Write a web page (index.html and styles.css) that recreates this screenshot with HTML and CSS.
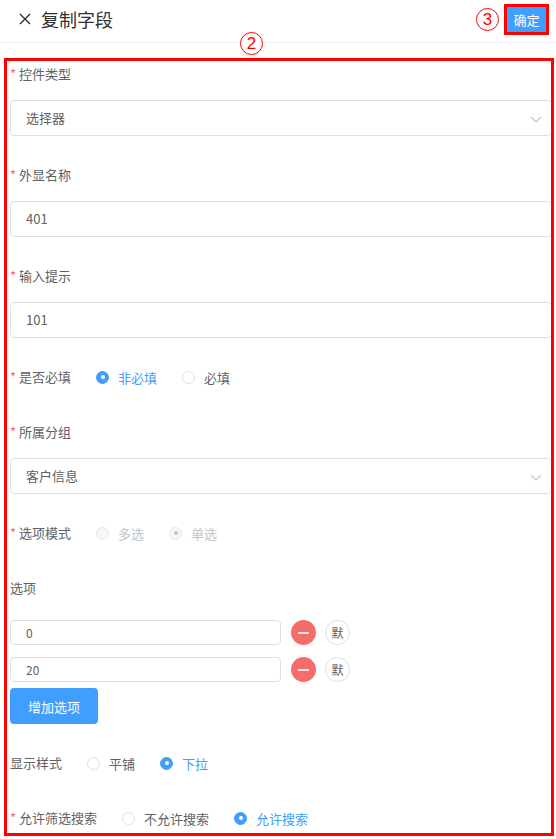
FILE: index.html
```html
<!DOCTYPE html>
<html lang="zh-CN">
<head>
  <meta charset="UTF-8" />
  <meta name="viewport" content="width=device-width, initial-scale=1.0"/>
  <title>复制字段</title>
  <link rel="stylesheet" href="styles.css">
</head>
<body>
  <header class="header">
    <svg class="close" width="12" height="12" viewBox="0 0 12 12">
      <path d="M1 1 L11 11 M11 1 L1 11" stroke="#303133" stroke-width="1.4" fill="none"/>
    </svg>
    <div class="title">复制字段</div>
    <div class="header-right">
      <span class="mark">3</span>
      <button class="btn-ok" type="button">确定</button>
    </div>
  </header>

  <div class="form">
    <div class="item">
      <div class="item-label req">控件类型</div>
      <div class="input select">选择器
        <svg class="arrow" width="12" height="7" viewBox="0 0 12 7"><polyline points="1,1 6,6 11,1" stroke="#c0c4cc" stroke-width="1.2" fill="none"/></svg>
      </div>
    </div>

    <div class="item">
      <div class="item-label req">外显名称</div>
      <div class="input">401</div>
    </div>

    <div class="item">
      <div class="item-label req">输入提示</div>
      <div class="input">101</div>
    </div>

    <div class="item inline">
      <div class="item-label req">是否必填</div>
      <label class="radio checked"><span class="dot"></span>非必填</label>
      <label class="radio"><span class="dot"></span>必填</label>
    </div>

    <div class="item">
      <div class="item-label req">所属分组</div>
      <div class="input select">客户信息
        <svg class="arrow" width="12" height="7" viewBox="0 0 12 7"><polyline points="1,1 6,6 11,1" stroke="#c0c4cc" stroke-width="1.2" fill="none"/></svg>
      </div>
    </div>

    <div class="item inline">
      <div class="item-label req">选项模式</div>
      <label class="radio disabled"><span class="dot"></span>多选</label>
      <label class="radio disabled checked"><span class="dot"></span>单选</label>
    </div>

    <div class="item">
      <div class="item-label">选项</div>
      <div class="options">
        <div class="opt">
          <div class="opt-input">0</div>
          <span class="minus"></span>
          <span class="def">默</span>
        </div>
        <div class="opt">
          <div class="opt-input">20</div>
          <span class="minus"></span>
          <span class="def">默</span>
        </div>
        <button class="btn-add" type="button">增加选项</button>
      </div>
    </div>

    <div class="item inline">
      <div class="item-label">显示样式</div>
      <label class="radio"><span class="dot"></span>平铺</label>
      <label class="radio checked"><span class="dot"></span>下拉</label>
    </div>

    <div class="item inline">
      <div class="item-label req">允许筛选搜索</div>
      <label class="radio"><span class="dot"></span>不允许搜索</label>
      <label class="radio checked"><span class="dot"></span>允许搜索</label>
    </div>
  </div>

  <!-- annotations -->
  <div class="note-box"></div>
  <span class="mark mark-2">2</span>
</body>
</html>
```

FILE: styles.css
```css
* {
  box-sizing: border-box;
}
body {
  margin: 0;
  font-family: "Noto Sans CJK SC", "Noto Sans", sans-serif;
  font-size: 13px;
  color: #606266;
  background: #fff;
  position: relative;
  overflow: hidden;
  height: 839px;
}
.header {
  height: 43px;
  padding: 0 7px 4px 19px;
  border-bottom: 1px solid #ebeef5;
  display: flex;
  align-items: center;
}
.title {
  margin-left: 10px;
  font-size: 18px;
  color: #303133;
}
.header-right {
  margin-left: auto;
  display: flex;
  align-items: center;
  gap: 5px;
}
.mark {
  width: 23px;
  height: 23px;
  border: 1px solid #f00;
  border-radius: 50%;
  color: #f00;
  font-size: 17px;
  line-height: 21px;
  text-align: center;
  background: #fff;
  font-family: "Liberation Sans", sans-serif;
}
.btn-ok {
  width: 45px;
  height: 31px;
  padding: 0;
  border: 3px solid #f00;
  background: #409eff;
  color: #fff;
  font-family: inherit;
  font-size: 13px;
}
.form {
  padding: 11px 4px 0 10px;
}
.item {
  margin-bottom: 19px;
}
.item-label {
  line-height: 40px;
  margin-bottom: 6px;
  color: #606266;
}
.req::before {
  content: "*";
  color: #f56c6c;
  margin-right: 3px;
}
.input {
  position: relative;
  height: 36px;
  line-height: 34px;
  padding: 0 15px;
  border: 1px solid #dcdfe6;
  border-radius: 4px;
  color: #606266;
}
.arrow {
  position: absolute;
  right: 9px;
  top: 15px;
}
.item.inline {
  display: flex;
  align-items: center;
  height: 40px;
  margin-bottom: 15px;
}
.item.inline .item-label {
  margin-bottom: 0;
  padding-right: 25px;
}
.radio {
  display: flex;
  align-items: center;
  margin-right: 25px;
  color: #606266;
}
.radio .dot {
  position: relative;
  width: 13px;
  height: 13px;
  border: 1px solid #dcdfe6;
  border-radius: 50%;
  margin-right: 9px;
  background: #fff;
}
.radio.checked {
  color: #409eff;
}
.radio.checked .dot {
  background: #409eff;
  border-color: #409eff;
}
.radio.checked .dot::after {
  content: "";
  position: absolute;
  left: 3.5px;
  top: 3.5px;
  width: 4px;
  height: 4px;
  border-radius: 50%;
  background: #fff;
}
.radio.disabled,
.radio.disabled.checked {
  color: #c0c4cc;
}
.radio.disabled .dot,
.radio.disabled.checked .dot {
  background: #f5f7fa;
  border-color: #e4e7ed;
}
.radio.disabled.checked .dot::after {
  background: #c0c4cc;
}
.options {
  margin-top: 12px;
  display: flex;
  flex-direction: column;
  align-items: flex-start;
  gap: 12px;
}
.opt {
  display: flex;
  align-items: center;
  height: 25px;
}
.opt-input {
  width: 271px;
  height: 25px;
  line-height: 23px;
  padding: 0 15px;
  border: 1px solid #dcdfe6;
  border-radius: 4px;
  font-size: 12px;
}
.minus {
  position: relative;
  width: 25px;
  height: 25px;
  margin-left: 10px;
  border-radius: 50%;
  background: #f56c6c;
}
.minus::after {
  content: "";
  position: absolute;
  left: 7px;
  top: 12px;
  width: 11px;
  height: 2px;
  background: rgba(255,255,255,0.8);
}
.def {
  width: 25px;
  height: 25px;
  margin-left: 9px;
  border: 1px solid #dcdfe6;
  border-radius: 50%;
  font-size: 12px;
  line-height: 23px;
  text-align: center;
  color: #606266;
}
.btn-add {
  margin-top: -6px;
  width: 88px;
  height: 36px;
  border: none;
  border-radius: 4px;
  background: #409eff;
  color: #fff;
  font-family: inherit;
  font-size: 13px;
}
.note-box {
  position: absolute;
  left: 4px;
  top: 58px;
  width: 550px;
  height: 778px;
  border: 3px solid #f00;
  pointer-events: none;
}
.mark-2 {
  position: absolute;
  left: 240px;
  top: 32px;
}
```
